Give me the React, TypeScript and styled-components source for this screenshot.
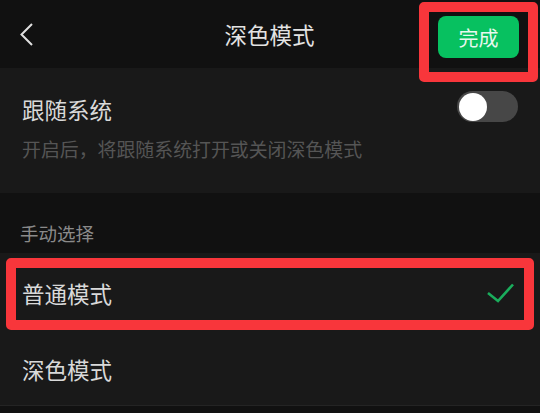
import React from "react";
import styled, { createGlobalStyle } from "styled-components";

const GlobalStyle = createGlobalStyle`
    html, body {
        margin: 0;
        padding: 0;
        background: #111111;
    }
    * {
        box-sizing: border-box;
    }
`;

const Page = styled.div`
    position: relative;
    width: 540px;
    height: 413px;
    overflow: hidden;
    background: #111111;
    font-family: "Noto Sans CJK SC", "Noto Sans", sans-serif;
    color: #d9d9d9;
`;

const Header = styled.div`
    display: grid;
    grid-template-columns: 1fr auto 1fr;
    align-items: center;
    height: 68px;
    padding: 0 21px 0 20px;
    background: #111111;
`;

const BackButton = styled.div`
    display: flex;
    align-items: center;
    justify-self: start;
    height: 22px;
`;

const Title = styled.div`
    font-size: 22.5px;
    line-height: 30px;
    color: #e3e3e3;
    letter-spacing: 0;
`;

const DoneButton = styled.div`
    justify-self: end;
    display: flex;
    align-items: center;
    justify-content: center;
    width: 81px;
    height: 42px;
    margin-top: 6px;
    border-radius: 8px;
    background: #07c160;
    color: #e8f8ee;
    font-size: 20px;
`;

const Section = styled.div`
    background: #191919;
    padding: 25px 22px 31px 22px;
`;

const FollowRow = styled.div`
    display: flex;
    align-items: center;
    justify-content: space-between;
`;

const Label = styled.div`
    font-size: 22.5px;
    line-height: 32px;
    color: #d9d9d9;
`;

const Hint = styled.div`
    margin-top: 11px;
    font-size: 18.9px;
    line-height: 26px;
    color: #555555;
`;

const Toggle = styled.div`
    display: flex;
    align-items: center;
    width: 61px;
    height: 31px;
    margin-top: -5px;
    margin-right: -0px;
    padding: 0 2px;
    border-radius: 16px;
    background: #474747;
`;

const Knob = styled.div`
    width: 28px;
    height: 28px;
    border-radius: 50%;
    background: #ffffff;
`;

const GroupLabel = styled.div`
    padding: 28px 20px 8px 20px;
    font-size: 18.5px;
    line-height: 24px;
    color: #8a8a8a;
`;

const List = styled.div`
    background: #191919;
    border-bottom: 1px solid #242424;
`;

const Option = styled.div`
    display: flex;
    align-items: center;
    justify-content: space-between;
    height: 76px;
    padding: 4px 26px 0 22px;
`;

const Annotation = styled.div<{ $x: number; $y: number; $w: number; $h: number }>`
    position: absolute;
    left: ${(p) => p.$x}px;
    top: ${(p) => p.$y}px;
    width: ${(p) => p.$w}px;
    height: ${(p) => p.$h}px;
    border: 10px solid #f8363b;
    border-radius: 5px;
    pointer-events: none;
`;

const options = [
    { name: "普通模式", selected: true },
    { name: "深色模式", selected: false },
];

const App = () => {
    return (
        <Page>
            <GlobalStyle />
            <Header>
                <BackButton>
                    <svg width="13" height="23" viewBox="0 0 13 23">
                        <polyline points="12,1 1.5,11.5 12,22" fill="none" stroke="#e0e0e0" strokeWidth="2" />
                    </svg>
                </BackButton>
                <Title>深色模式</Title>
                <DoneButton>完成</DoneButton>
            </Header>
            <Section>
                <FollowRow>
                    <Label>跟随系统</Label>
                    <Toggle>
                        <Knob />
                    </Toggle>
                </FollowRow>
                <Hint>开启后，将跟随系统打开或关闭深色模式</Hint>
            </Section>
            <GroupLabel>手动选择</GroupLabel>
            <List>
                {options.map((o) => (
                    <Option key={o.name}>
                        <Label>{o.name}</Label>
                        {o.selected && (
                            <svg width="27" height="20" viewBox="0 0 27 20">
                                <polyline points="1,10 11,18 26,1.5" fill="none" stroke="#1aad5c" strokeWidth="2.6" />
                            </svg>
                        )}
                    </Option>
                ))}
            </List>
            <Annotation $x={419} $y={2} $w={119} $h={80} />
            <Annotation $x={6} $y={258} $w={528} $h={72} />
        </Page>
    );
};

export default App;
